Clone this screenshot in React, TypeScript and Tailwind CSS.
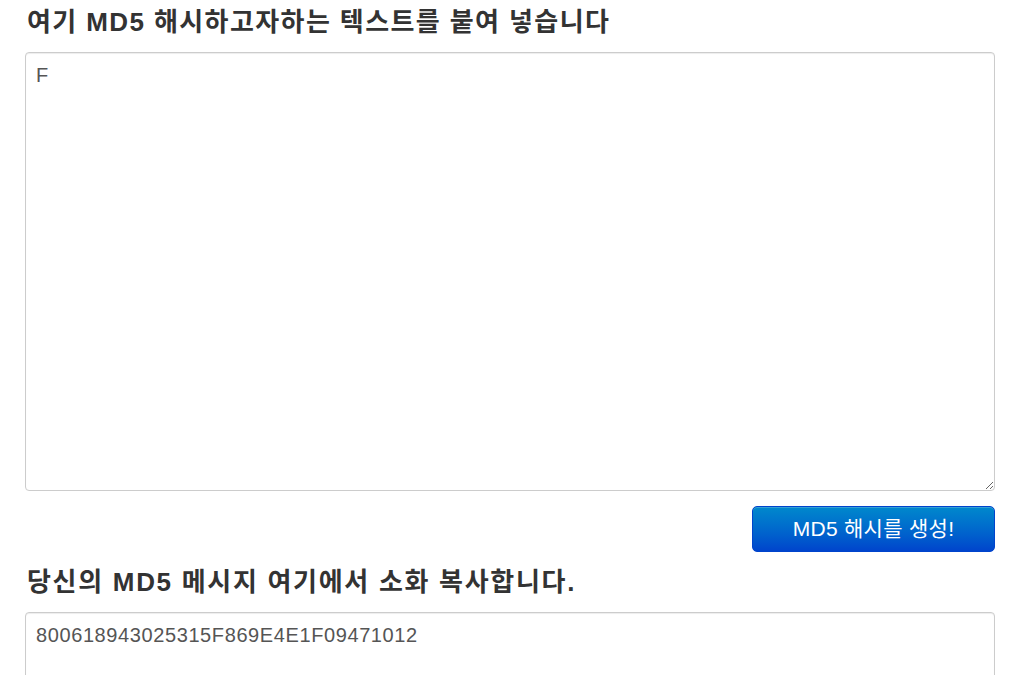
export default function App() {
  const font = { fontFamily: '"Liberation Sans", "Noto Sans CJK KR", sans-serif' };

  return (
    <div className="min-h-screen bg-white text-[#333]" style={font}>
      <div className="w-[970px] ml-[25px] pt-[4px]">
        <h3 className="text-[26px] font-bold leading-[36px] tracking-[1.4px] pl-[2px]">
          여기 MD5 해시하고자하는 텍스트를 붙여 넣습니다
        </h3>
        <textarea
          defaultValue="F"
          className="mt-[12px] block w-full h-[439px] rounded-[4px] border border-[#ccc] bg-white px-[10px] py-[8px] text-[20px] leading-[28px] text-[#555] shadow-[inset_0_1px_1px_rgba(0,0,0,0.075)] outline-none"
        />
        <div className="flex justify-end mt-[15px]">
          <button className="w-[243px] h-[46px] rounded-[5px] border border-[#0044cc] bg-gradient-to-b from-[#0088cc] to-[#0044cc] text-white text-[21px] tracking-[0.3px] shadow-[inset_0_1px_0_rgba(255,255,255,0.2)]">
            MD5 해시를 생성!
          </button>
        </div>
        <h3 className="mt-[12px] text-[26px] font-bold leading-[36px] tracking-[1.7px] pl-[2px]">
          당신의 MD5 메시지 여기에서 소화 복사합니다.
        </h3>
        <textarea
          readOnly
          defaultValue="800618943025315F869E4E1F09471012"
          className="mt-[12px] block w-full h-[200px] rounded-[4px] border border-[#ccc] bg-white px-[10px] py-[8px] text-[20px] leading-[28px] tracking-[0.6px] text-[#555] shadow-[inset_0_1px_1px_rgba(0,0,0,0.075)] outline-none"
        />
      </div>
    </div>
  );
}
